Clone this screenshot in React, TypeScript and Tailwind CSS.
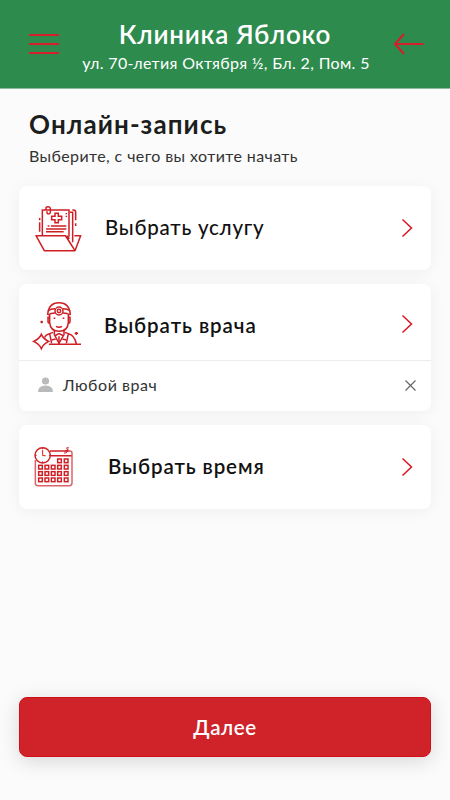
import React from 'react';

const FolderIcon: React.FC = () => (
  <svg className="h-[65px] w-[65px] shrink-0" viewBox="0 0 195 195" fill="none" stroke="#cf1f25" strokeWidth="4.5">
    <path d="M52 118V42h80v80" />
    <path d="M134 49h9v90" />
    <path d="M142 42h4q6 0 6 7v24M152 82v8" />
    <path d="M44 66v7M44 79v28" />
    <path d="M63 42v-5q0-5 6-5t7 5v12q0 5-5 5t-5-4v-4" />
    <path d="M90 52h10v9h10v10h-10v9H90v-9H80V61h10z" />
    <path d="M124 51v4M124 59v4M68 90h5M78 90h46M63 99h61M63 107h53" />
    <path d="M33 119h88l29 45H58zM122 119l28 45 17-45h-19M126 119l7 9" strokeLinejoin="round" />
  </svg>
);

const DoctorIcon: React.FC = () => (
  <svg className="h-[65px] w-[65px] shrink-0" viewBox="0 0 195 195" fill="none" stroke="#cf1f25" strokeWidth="4.5">
    <path d="M68 69q2-37 34-37t34 37" />
    <path d="M68 57q9-7 22-7M114 50q13 0 22 7M69 69q8-6 21-6M114 63q13 0 21 6" />
    <circle cx="102" cy="57" r="12" />
    <circle cx="102" cy="57" r="5" />
    <path d="M74 69v23q2 26 28 26t28-26V69M73 76h-4v13q0 5 5 5M131 76h4v13q0 5-5 5" />
    <path d="M86 79h5M113 79h5M93 103q9 5 18 0" />
    <path d="M88 114v14l14 26 15-26v-14M84 121l-10 4 6 29M120 121l10 4-6 29M88 132l14-7 15 7" />
    <path d="M102 133v23M74 125q-13 3-15 12M130 125q19 4 24 31M92 141l-12 3M112 141l12 3" />
    <path d="M49 127q6 14 22 21-16 8-22 22-6-14-23-22 17-7 23-21z" />
    <path d="M72 157h96M50 86v8M46 90h8M154 120v9M149 124h10" />
  </svg>
);

const CalendarIcon: React.FC = () => (
  <svg className="h-[65px] w-[65px] shrink-0" viewBox="0 0 195 195" fill="none" stroke="#cf1f25" strokeWidth="4.5">
    <path d="M31 75v69q0 8 8 8h94q8 0 8-8V54q0-6-7-6" strokeOpacity="0.7" />
    <path d="M75 48h59M78 62h62" />
    <path d="M117 54q9 2 10-6v-6h4M123 40l8-3M120 47h10" strokeWidth="3" />
    <circle cx="53" cy="61" r="23" />
    <path d="M53 45v17h9M53 38v5M53 79v5M30 61h5M72 61h5" strokeWidth="3" />
    {[78, 97, 116, 135].map((y, row) =>
      [41, 60, 79, 98, 118].slice(row === 0 ? 3 : 0).map((x) => (
        <rect key={`${x}-${y}`} x={x} y={y - 6} width="11" height="11" />
      ))
    )}
  </svg>
);

const Chevron: React.FC = () => (
  <svg className="ml-auto mr-[18px] h-5 w-3 shrink-0" viewBox="0 0 12 20" fill="none" stroke="#d9141c" strokeWidth="1.5">
    <path d="M1.5 1.5l9 8.5-9 8.5" />
  </svg>
);

export default function App() {
  return (
    <div className="flex h-[800px] w-[450px] flex-col overflow-hidden bg-[#fbfbfb] font-['Lato','Open_Sans',sans-serif] text-[#1c1e1d]">
      <header className="flex h-[89px] shrink-0 justify-between border-b border-[#8dbb9c] bg-[#2d8b4d] px-[26px] text-white">
        <svg className="ml-[3px] mt-[33px] h-[22px] w-[30px]" viewBox="0 0 30 22" stroke="#d51f2a" strokeWidth="2">
          <path d="M0 2h30M0 11h30M0 20h30" />
        </svg>
        <div className="flex flex-col items-center whitespace-nowrap">
          <h1 className="mt-[18px] mr-[3px] text-[26px] leading-8 font-semibold tracking-[0.75px]">Клиника Яблоко</h1>
          <p className="mr-px text-base leading-[26px] tracking-[0.35px]">ул. 70-летия Октября ½, Бл. 2, Пом. 5</p>
        </div>
        <svg className="mt-[33px] h-[22px] w-[30px]" viewBox="0 0 30 22" fill="none" stroke="#d51f2a" strokeWidth="2">
          <path d="M29.500 11H1M10 1L1 11l9 10" />
        </svg>
      </header>

      <main className="flex grow flex-col px-[19px]">
        <div className="pl-[10px]">
          <h2 className="mt-[19px] text-[26px] leading-8 font-bold tracking-[1.1px]">Онлайн-запись</h2>
          <p className="mt-1 text-base leading-6 tracking-[0.4px] text-[#333]">Выберите, с чего вы хотите начать</p>
        </div>

        <div className="mt-[18px] flex flex-col gap-[14px] text-[#111] *:rounded-lg *:bg-white *:shadow-[0_2px_16px_rgba(0,0,0,0.05)]">
          <section className="flex h-[84px] items-center pl-[6px]">
            <FolderIcon />
            <h3 className="ml-[15px] pb-0.5 text-[20.5px] font-medium tracking-[0.75px]">Выбрать услугу</h3>
            <Chevron />
          </section>

          <section className="h-[127px]">
            <div className="flex h-[77px] items-center border-b border-[#ececec] pt-1 pl-[6px]">
              <DoctorIcon />
              <h3 className="ml-[14px] pt-0.5 text-[20.5px] font-semibold tracking-[0.95px]">Выбрать врача</h3>
              <Chevron />
            </div>
            <div className="flex h-12 items-center pl-[19px]">
              <svg className="h-4 w-[15px]" viewBox="0 0 15 16" fill="#bababa">
                <circle cx="7.500" cy="4" r="3.600" />
                <path d="M0 15q0-6.500 7.500-6.500T15 15z" />
              </svg>
              <span className="ml-[10px] text-base tracking-[0.55px] text-[#333]">Любой врач</span>
              <svg className="mr-[15px] ml-auto h-[11px] w-[11px]" viewBox="0 0 11 11" stroke="#666" strokeWidth="1.200">
                <path d="M.5.500l10 10M10.500.500l-10 10" />
              </svg>
            </div>
          </section>

          <section className="flex h-[84px] items-center pl-[6px]">
            <CalendarIcon />
            <h3 className="ml-[18px] pb-px text-[20.5px] font-semibold tracking-[0.9px]">Выбрать время</h3>
            <Chevron />
          </section>
        </div>

        <button className="mt-auto mb-[43px] h-[60px] w-full rounded-lg border border-[#d00f1b] bg-[#d02329] pt-px text-[20.5px] font-semibold tracking-[0.6px] text-white shadow-[0_4px_20px_rgba(0,0,0,0.15)]">
          Далее
        </button>
      </main>
    </div>
  );
}
